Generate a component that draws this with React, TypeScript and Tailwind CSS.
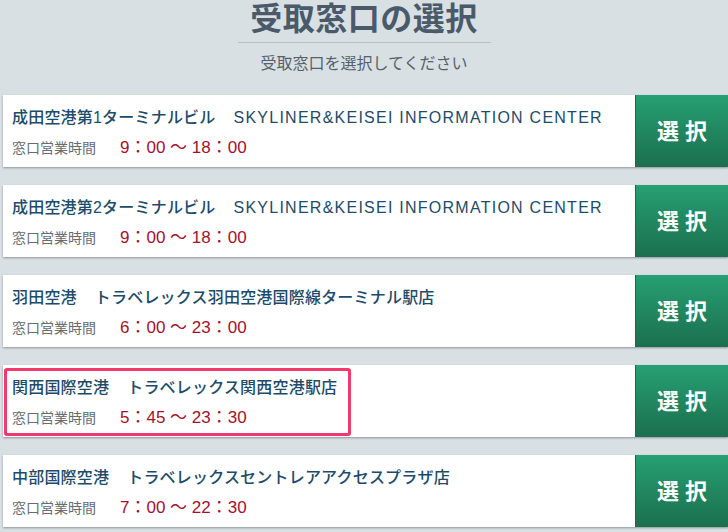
import React from 'react';

interface Counter {
    place: string;
    shop: string;
    hours: string;
    latin?: boolean;
    highlight?: boolean;
}

const counters: Counter[] = [
    { place: '成田空港第1ターミナルビル', shop: 'SKYLINER&KEISEI INFORMATION CENTER', hours: '9：00 ～ 18：00', latin: true },
    { place: '成田空港第2ターミナルビル', shop: 'SKYLINER&KEISEI INFORMATION CENTER', hours: '9：00 ～ 18：00', latin: true },
    { place: '羽田空港', shop: 'トラベレックス羽田空港国際線ターミナル駅店', hours: '6：00 ～ 23：00' },
    { place: '関西国際空港', shop: 'トラベレックス関西空港駅店', hours: '5：45 ～ 23：30', highlight: true },
    { place: '中部国際空港', shop: 'トラベレックスセントレアアクセスプラザ店', hours: '7：00 ～ 22：30' },
];

const font = "font-['Liberation_Sans','Noto_Sans_CJK_JP',sans-serif]";

const CounterCard = ({ c }: { c: Counter }) => (
    <div className="flex h-[72px] bg-white shadow-[0_1px_2px_rgba(0,0,0,0.35)]">
        <div className="flex-1 relative pl-[9px]">
            {/* Highlight frame drawn over the info block */}
            {c.highlight && (
                <div className="absolute left-[1px] top-[3px] w-[347px] h-[68px] border-[3px] border-[#f2386c] rounded-[3px]" />
            )}
            <p className="mt-[12px] text-[16px] leading-[22px] text-[#1d4b69] font-medium tracking-[0.2px]">
                {c.place}
                <span className="ml-[18px]">
                    {c.latin ? <span className="tracking-[1.25px]">{c.shop}</span> : c.shop}
                </span>
            </p>
            <div className="flex items-center mt-[9px]">
                <span className="text-[14px] leading-[20px] text-[#666c70] w-[108px]">窓口営業時間</span>
                <span className="text-[17px] leading-[20px] text-[#a3112d]">{c.hours}</span>
            </div>
        </div>
        <button className="w-[93px] h-full flex items-center justify-center bg-gradient-to-b from-[#27a073] to-[#1b6f4e] border-l border-[#1a6a4a] text-white text-[22px] font-bold tracking-[6px] pl-[6px]">
            選択
        </button>
    </div>
);

const App = () => {
    return (
        <div className={`min-h-screen bg-[#d9e0e4] ${font}`}>
            <div className="flex flex-col items-center">
                <h1 className="text-[32px] leading-[38px] font-bold text-[#4a5a69] tracking-[0.5px]">受取窓口の選択</h1>
                <div className="w-[253px] h-px bg-[#b5bfc5] mt-[4px]" />
                <p className="mt-[10px] text-[16px] leading-[22px] text-[#56626b]">受取窓口を選択してください</p>
            </div>
            <div className="flex flex-col gap-[18px] pl-[3px] mt-[20px]">
                {counters.map((c, i) => (
                    <CounterCard key={i} c={c} />
                ))}
            </div>
        </div>
    );
};

export default App;
